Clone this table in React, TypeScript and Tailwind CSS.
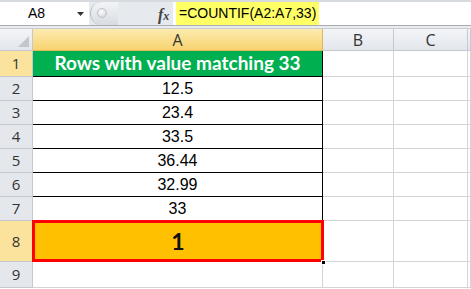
import React from "react";

const HEAD_BG = "bg-[linear-gradient(#f3f5f8,#e2e6ec)]";

const values = ["12.5", "23.4", "33.5", "36.44", "32.99", "33"];

function RowHead({ n, active, h }: { n: number; active?: boolean; h: string }) {
  return (
    <div
      className={`w-[33px] shrink-0 ${h} flex items-center justify-center border-r border-b border-[#c5c9cf] text-[15px] text-[#333] ${
        active ? "bg-[#fbe39d]" : "bg-[#e4e8ed]"
      }`}
      style={{ fontFamily: "'Open Sans', 'Liberation Sans', sans-serif" }}
    >
      {n}
    </div>
  );
}

function Blank({ h, w }: { h: string; w: string }) {
  return <div className={`${w} ${h} shrink-0 border-r border-b border-[#d4d4d4]`} />;
}

export default function App() {
  return (
    <div className="w-[471px] h-[289px] overflow-hidden bg-white select-none" style={{ fontFamily: "'Liberation Sans', Arial, sans-serif" }}>
      {/* formula bar */}
      <div className="h-[26px] flex bg-[#dfe3e8] border-t-2 border-[#d7dade] border-b border-b-[#a9adb3]">
        <div className="w-[89px] shrink-0 bg-white flex items-center relative">
          <span className="ml-[28px] text-[14px] text-black">A8</span>
          <svg className="absolute left-[77px] top-[10px]" width="7" height="4" viewBox="0 0 7 4">
            <path d="M0 0h7L3.5 4z" fill="#333" />
          </svg>
        </div>
        <div className="w-[84px] shrink-0 flex items-center relative bg-[#e6e9ed]">
          <div className="absolute left-[1px] top-0 bottom-0 w-[28px] rounded-l-full bg-[linear-gradient(#f2f4f6,#d8dce1)] border-l border-[#b8bcc2]" />
          <div className="absolute left-[8px] top-[6px] w-[10px] h-[10px] rounded-full bg-[radial-gradient(circle_at_40%_35%,#ffffff,#c9cdd3)] border border-[#bfc3c9]" />
          <span
            className="absolute left-[69px] top-[1px] text-[16px] italic font-bold text-[#444]"
            style={{ fontFamily: "'Liberation Serif', 'Times New Roman', serif" }}
          >
            f<span className="text-[12px]">x</span>
          </span>
        </div>
        <div className="flex-1 bg-white flex items-center">
          <span className="ml-[3px] h-full flex items-center px-[3px] bg-[#ffff66] text-[14px] text-black">
            =COUNTIF(A2:A7,33)
          </span>
        </div>
      </div>
      <div className="h-[3px] bg-[#e9ebee] border-b border-[#c9ccd1]" />

      {/* column headers */}
      <div className="flex h-[22px]">
        <div className={`w-[33px] shrink-0 border-r border-b border-[#c5c9cf] ${HEAD_BG} relative`}>
          <svg className="absolute right-[3px] bottom-[3px]" width="11" height="11" viewBox="0 0 11 11">
            <path d="M11 0V11H0z" fill="#c3c7cd" />
          </svg>
        </div>
        {[
          ["A", "w-[290px]", true],
          ["B", "w-[71px]", false],
          ["C", "w-[74px]", false],
          ["", "flex-1", false],
        ].map(([l, w, act]) => (
          <div
            key={String(l) || "d"}
            className={`${w} shrink-0 flex items-center justify-center border-r border-b text-[16px] text-[#333] ${
              act
                ? "bg-[linear-gradient(#fcebb0,#f8d370)] border-[#e2b75a]"
                : `${HEAD_BG} border-[#c5c9cf]`
            }`}
            style={{ fontFamily: "'Open Sans', 'Liberation Sans', sans-serif" }}
          >
            {l}
          </div>
        ))}
      </div>

      {/* row 1 */}
      <div className="flex h-[26px]">
        <RowHead n={1} h="h-[26px]" active />
        <div
          className="w-[290px] shrink-0 h-[26px] bg-[#00b050] border-r border-b border-black flex items-center justify-center text-white font-bold text-[19px]"
          style={{ fontFamily: "'Lato', 'Open Sans', sans-serif" }}
        >
          Rows with value matching 33
        </div>
        <Blank h="h-[26px]" w="w-[71px]" />
        <Blank h="h-[26px]" w="w-[74px]" />
        <Blank h="h-[26px]" w="flex-1" />
      </div>

      {values.map((v, i) => (
        <div key={v} className="flex h-[24px]">
          <RowHead n={i + 2} h="h-[24px]" />
          <div className="w-[290px] shrink-0 h-[24px] border-r border-b border-black flex items-center justify-center text-[16px] text-black">
            {v}
          </div>
          <Blank h="h-[24px]" w="w-[71px]" />
          <Blank h="h-[24px]" w="w-[74px]" />
          <Blank h="h-[24px]" w="flex-1" />
        </div>
      ))}

      {/* row 8: result */}
      <div className="flex h-[41px]">
        <RowHead n={8} h="h-[41px]" active />
        <div className="w-[290px] shrink-0 h-[41px] relative">
          <div
            className="absolute -top-[1px] -left-[1px] w-[292px] h-[42px] bg-[#ffc000] border-[3px] border-[#ff0000] flex items-center justify-center text-[23px] font-bold text-[#111]"
            style={{ fontFamily: "'Lato', 'Open Sans', sans-serif" }}
          >
            1
          </div>
          <div className="absolute right-[-3px] bottom-[-3px] w-[5px] h-[5px] bg-black border border-white" />
        </div>
        <Blank h="h-[41px]" w="w-[71px]" />
        <Blank h="h-[41px]" w="w-[74px]" />
        <Blank h="h-[41px]" w="flex-1" />
      </div>

      <div className="flex h-[26px]">
        <RowHead n={9} h="h-[26px]" />
        <Blank h="h-[26px]" w="w-[290px]" />
        <Blank h="h-[26px]" w="w-[71px]" />
        <Blank h="h-[26px]" w="w-[74px]" />
        <Blank h="h-[26px]" w="flex-1" />
      </div>
    </div>
  );
}
